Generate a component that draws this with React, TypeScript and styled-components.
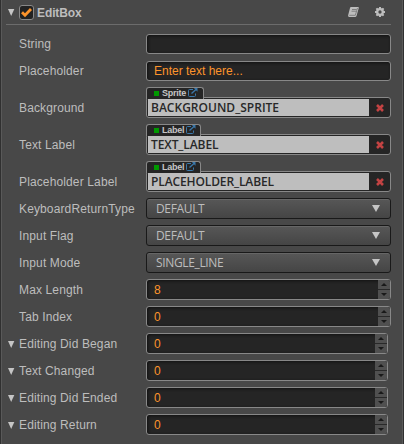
import React from "react";
import styled, { createGlobalStyle } from "styled-components";

const Global = createGlobalStyle`
  * { box-sizing: border-box; }
  body { margin: 0; background: #484848; overflow: hidden; }
`;

const Panel = styled.main`
  width: 404px;
  height: 444px;
  padding-right: 10px;
  background: #484848;
  border-left: 1px solid #303030;
  box-shadow: inset 1px 0 #595959, inset -1px 0 #303030, inset -2px 0 #595959;
  color: #bdbdbd;
  font: 12px "Liberation Sans", Arial, sans-serif;
`;

const Header = styled.header`
  display: flex;
  align-items: center;
  height: 25px;
  margin: 0 3px 9px 5px;
  border-bottom: 1px solid #6c6c6c;
`;

const Title = styled.h1`
  flex: 1;
  margin: 0 0 0 3px;
  font-size: 12px;
  line-height: 24px;
  padding-top: 1px;
  letter-spacing: -0.1px;
`;

const Check = styled.span`
  display: flex;
  width: 15px;
  height: 15px;
  margin: 1px 0 0 4px;
  border: 1px solid #888;
  border-radius: 3px;
  background: #222;
`;

const HeaderIcon = styled.svg<{ $gap: number }>`
  display: block;
  margin: 0 ${(p) => p.$gap}px 0 0;
`;

const Row = styled.div<{ $height?: number; $tab?: boolean }>`
  display: flex;
  align-items: flex-start;
  height: ${(p) => p.$height ?? 27}px;
  padding-left: 5px;
  --label-top: ${(p) => (p.$tab ? 10 : 0)}px;
`;

const Arrow = styled.span`
  display: flex;
  width: 13px;
  height: 22px;
  align-items: center;
  margin-top: var(--label-top);
`;

const Label = styled.span<{ $lineHeight?: number }>`
  width: 127px;
  flex: none;
  margin-top: var(--label-top);
  line-height: ${(p) => p.$lineHeight ?? 23}px;
  white-space: nowrap;
  letter-spacing: 0.13px;
`;

const Input = styled.div<{ $height?: number; $width?: number }>`
  display: flex;
  width: ${(p) => p.$width ?? 245}px;
  height: ${(p) => p.$height ?? 21}px;
  border: 1px solid #888;
  border-radius: 3px;
  background: #252525;
  box-shadow: inset 1px 1px 3px #111;
  color: #fd942b;
  line-height: ${(p) => (p.$height ? 18 : 20)}px;
  overflow: hidden;
`;

const Value = styled.span`
  flex: 1;
  padding-left: 7px;
`;

const Stepper = styled.span`
  display: grid;
  grid-template-rows: 9px 9px;
  row-gap: 1px;
  width: 12px;
  background: #292929;
`;

const Step = styled.span`
  display: flex;
  align-items: center;
  justify-content: center;
  background: #505050;
`;

const Asset = styled.div`
  width: 245px;
`;

const Tab = styled.div<{ $width: number }>`
  position: relative;
  display: flex;
  align-items: center;
  width: ${(p) => p.$width}px;
  height: 12px;
  margin-bottom: -2px;
  padding: 0 0 2px 7px;
  border: 1px solid #888;
  border-bottom: 0;
  border-radius: 3px 3px 0 0;
  background: #252525;
  color: #c5c5c5;
  font-weight: bold;
  font-size: 9px;
  line-height: 10px;
  letter-spacing: -0.25px;
`;

const Dot = styled.i`
  width: 5px;
  height: 5px;
  flex: none;
  margin: 1px 3px 0 0;
  background: #090;
`;

const AssetField = styled.div`
  display: flex;
  height: 21px;
  padding: 1px 0 1px 1px;
  border: 1px solid #888;
  border-radius: 3px;
  background: #252525;
`;

const AssetName = styled.span<{ $spacing: number }>`
  width: 221px;
  padding-left: 3px;
  background: #bebebe;
  color: #282828;
  font: 600 12px/17px "Open Sans", "Noto Sans", sans-serif;
  letter-spacing: ${(p) => p.$spacing}px;
`;

const Remove = styled.span`
  display: flex;
  flex: 1;
  align-items: center;
  justify-content: center;
`;

const Select = styled.div`
  display: flex;
  align-items: center;
  justify-content: space-between;
  width: 245px;
  height: 21px;
  padding: 0 10px 0 9px;
  border: 1px solid #191919;
  border-radius: 3px;
  background: linear-gradient(#575757, #454545);
  box-shadow: inset 0 1px #666;
  font: 12px/19px "Open Sans", "Noto Sans", sans-serif;
`;

const Option = styled.span`
  letter-spacing: -0.35px;
`;

const SelectArrow = () => (
  <svg width="8" height="7" viewBox="0 0 8 7">
    <path d="M0 0H8L4 7Z" fill="#c5c5c5" />
  </svg>
);

const FoldArrow = () => (
  <svg width="9" height="7" viewBox="0 0 9 7">
    <path d="M2 0H8.3L5.2 7Z" fill="#c5c5c5" />
  </svg>
);

const LinkSvg = styled.svg`
  flex: none;
  margin-left: 1.5px;
`;

const LinkIcon = () => (
  <LinkSvg width="10" height="9" viewBox="0 0 10 9" fill="none" stroke="#3b78aa">
    <path d="M5 1.5H1.5Q.5 1.5 .5 2.5V7.5Q.5 8.5 1.5 8.5H6.5Q7.5 8.5 7.5 7.5V5.5" />
    <path d="M3.5 5.5L8 1.5" strokeWidth="1.4" />
    <path d="M5.8 0H9.5V3.7Z" fill="#3b78aa" stroke="none" />
  </LinkSvg>
);

const StepperControl = () => (
  <Stepper>
    <Step><svg width="6" height="3"><path d="M0 3L3 0L6 3Z" fill="#191919" /></svg></Step>
    <Step><svg width="6" height="3"><path d="M0 0H6L3 3Z" fill="#191919" /></svg></Step>
  </Stepper>
);

const assets = [
  { label: "Background", type: "Sprite", value: "BACKGROUND_SPRITE", tab: 58, spacing: 0.01 },
  { label: "Text Label", type: "Label", value: "TEXT_LABEL", tab: 55, spacing: -0.1 },
  { label: "Placeholder Label", type: "Label", value: "PLACEHOLDER_LABEL", tab: 55, spacing: -0.12 },
];

const selects = [
  { label: "KeyboardReturnType", value: "DEFAULT" },
  { label: "Input Flag", value: "DEFAULT" },
  { label: "Input Mode", value: "SINGLE_LINE" },
];

const numbers = [
  { label: "Max Length", value: 8 },
  { label: "Tab Index", value: 0 },
  { label: "Editing Did Began", value: 0, event: true },
  { label: "Text Changed", value: 0, event: true },
  { label: "Editing Did Ended", value: 0, event: true },
  { label: "Editing Return", value: 0, event: true },
];

export default function App() {
  return (
    <>
      <Global />
      <Panel>
        <Header>
          <FoldArrow />
          <Check>
            <svg width="13" height="13" viewBox="0 0 13 13"><path d="M2 6.2L5 9.2L11 3" fill="none" stroke="#fd942b" strokeWidth="2.8" /></svg>
          </Check>
          <Title>EditBox</Title>
          <HeaderIcon $gap={16} width="11" height="10" viewBox="0 0 11 10">
            <path d="M3 0H10.2Q11 .3 10.7 1.2L8.5 9Q8.2 10 7 10H1Q-.2 9.5.2 8L2 1Q2.2 0 3 0Z" fill="#bdbdbd" />
            <path d="M4 2.5H8.5M3.5 4.2H8M1.3 8.3H7.3L9.5 1" fill="none" stroke="#555" strokeWidth=".6" />
          </HeaderIcon>
          <HeaderIcon $gap={6} width="10" height="10" viewBox="0 0 10 10">
            <circle cx="5" cy="5" r="2.8" fill="none" stroke="#bdbdbd" strokeWidth="2.3" />
            <path d="M5 0V2M5 8V10M0 5H2M8 5H10M1.4 1.4L2.8 2.8M7.2 7.2L8.6 8.6M1.4 8.6L2.8 7.2M7.2 2.8L8.6 1.4" stroke="#bdbdbd" strokeWidth="2" />
          </HeaderIcon>
        </Header>
        <Row>
          <Arrow /><Label $lineHeight={21}>String</Label><Input $height={20} />
        </Row>
        <Row $height={26}>
          <Arrow /><Label $lineHeight={21}>Placeholder</Label>
          <Input $height={20}><Value>Enter text here...</Value></Input>
        </Row>
        {assets.map((a) => (
          <Row key={a.label} $height={37} $tab>
            <Arrow /><Label>{a.label}</Label>
            <Asset>
              <Tab $width={a.tab}><Dot />{a.type}<LinkIcon /></Tab>
              <AssetField>
                <AssetName $spacing={a.spacing}>{a.value}</AssetName>
                <Remove>
                  <svg width="8" height="8" viewBox="0 0 8 8"><path d="M1 1L7 7M7 1L1 7" stroke="#c34343" strokeWidth="2.6" /></svg>
                </Remove>
              </AssetField>
            </Asset>
          </Row>
        ))}
        {selects.map((s) => (
          <Row key={s.label}>
            <Arrow /><Label>{s.label}</Label>
            <Select><Option>{s.value}</Option><SelectArrow /></Select>
          </Row>
        ))}
        {numbers.map((n) => (
          <Row key={n.label}>
            <Arrow>{n.event && <FoldArrow />}</Arrow>
            <Label>{n.label}</Label>
            <Input $width={n.event ? 242 : 245}><Value>{n.value}</Value><StepperControl /></Input>
          </Row>
        ))}
      </Panel>
    </>
  );
}
